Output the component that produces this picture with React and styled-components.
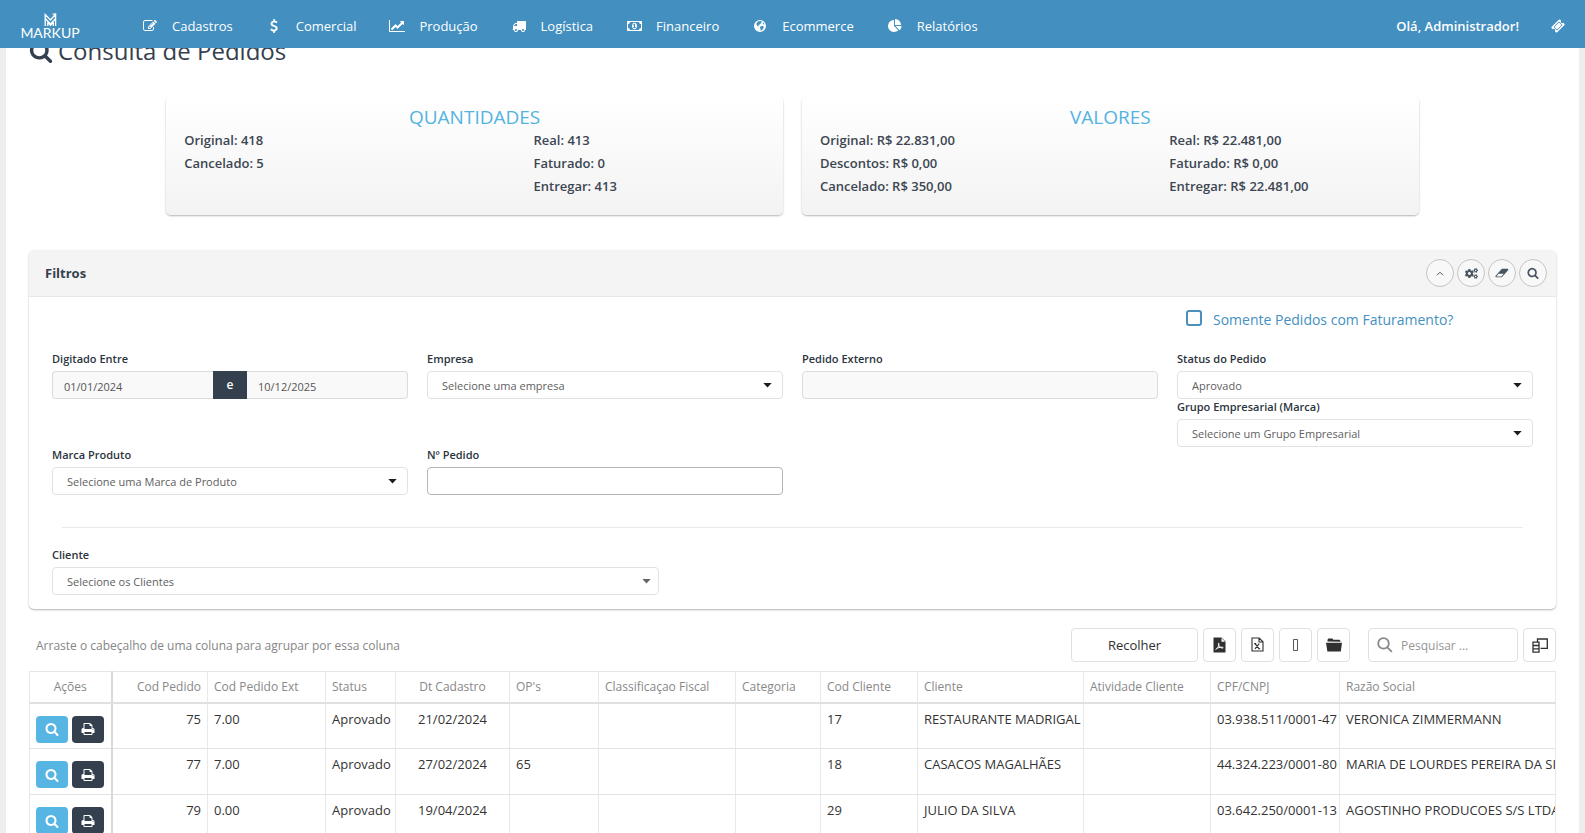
import styled, { createGlobalStyle } from 'styled-components';
import { FaCogs } from 'react-icons/fa';

const GlobalStyle = createGlobalStyle`
  * {
    box-sizing: border-box;
  }

  html {
    scrollbar-width: none;
  }

  body {
    margin: 0;
    background: #eeeeee;
    color: #34404e;
    font-family: 'Open Sans', 'Noto Sans', sans-serif;
    font-size: 13px;
  }

  button, input, select {
    font-family: inherit;
    font-size: inherit;
    color: inherit;
  }
`;

const Navbar = styled.header`
  position: fixed;
  top: 0;
  left: 0;
  right: 0;
  z-index: 10;
  display: flex;
  align-items: center;
  height: 48px;
  padding: 3px 20px 0;
  background: #438fc0;
  color: #fff;
`;

const Brand = styled.a`
  display: flex;
  flex-direction: column;
  align-items: center;
  width: 60px;
  color: #fff;
  font-family: Lato, sans-serif;
  font-size: 14px;
  line-height: 12px;
  text-decoration: none;
`;

const Menu = styled.nav`
  display: flex;
  flex: 1;
  gap: 31px;
  margin-left: 60px;
`;

const MenuLink = styled.a`
  display: flex;
  align-items: center;
  gap: 12px;
  color: #fff;
  text-decoration: none;
`;

const IconBox = styled.span`
  display: flex;
  justify-content: center;
  width: 20px;
`;

const UserName = styled.a`
  margin-right: 32px;
  color: #fff;
  font-weight: 600;
  text-decoration: none;
`;

const Page = styled.main`
  min-height: 100vh;
  margin: 0 6px;
  padding: 34px 23px 0;
  background: #fff;
`;

const Title = styled.h1`
  display: flex;
  align-items: center;
  gap: 5px;
  margin: 0;
  font-size: 24px;
  font-weight: 400;
  line-height: 34px;
`;

const Summary = styled.section`
  display: grid;
  grid-template-columns: 1fr 1fr;
  gap: 19px;
  width: 83.333%;
  margin: 29px auto 35px;
  padding: 0 10px;
`;

const SummaryCard = styled.div`
  height: 118px;
  padding: 8px 0 0 18px;
  border-radius: 5px;
  background: linear-gradient(#ffffff, #f3f3f3);
  box-shadow: 0 1px 2px rgba(0, 0, 0, 0.3);
  clip-path: inset(0 -3px -4px -3px);
  color: #3c4652;
  font-weight: 600;

  h2 {
    margin: 0 18px 0 0;
    color: #53b3e1;
    font-size: 19px;
    font-weight: 500;
    line-height: 24px;
    text-align: center;
  }
`;

const SummaryColumns = styled.div`
  display: grid;
  grid-template-columns: 7fr 5fr;
  line-height: 23px;

  p {
    margin: 0;
  }
`;

const Panel = styled.section`
  border-radius: 5px;
  background: #fff;
  box-shadow: 0 1px 2px rgba(0, 0, 0, 0.3);
`;

const PanelHeader = styled.div`
  display: flex;
  align-items: center;
  justify-content: space-between;
  height: 47px;
  padding: 0 9px 0 16px;
  border-bottom: 1px solid #e7e7e7;
  border-radius: 5px 5px 0 0;
  background: #f4f4f4;

  h3 {
    margin: 0;
    font-size: 13px;
    font-weight: 700;
  }
`;

const PanelActions = styled.div`
  display: flex;
  gap: 3px;
`;

const RoundButton = styled.button`
  display: flex;
  align-items: center;
  justify-content: center;
  width: 28px;
  height: 28px;
  padding: 0;
  border: 1px solid #c4c4c4;
  border-radius: 50%;
  background: #f8f8f8;
  color: #4a5461;
`;

const PanelBody = styled.div`
  padding: 0 23px 14px;
`;

const FieldGrid = styled.div`
  display: grid;
  grid-template-columns: repeat(4, 1fr);
  column-gap: 19px;
`;

const CheckLabel = styled.label`
  grid-column: 4;
  display: flex;
  align-items: center;
  gap: 11px;
  height: 54px;
  padding: 0 0 9px 9px;
  color: #4590c1;
  font-size: 14px;

  input {
    appearance: none;
    width: 16px;
    height: 16px;
    margin: 0 0 4px;
    border: 2px solid #4b8fbd;
    border-radius: 3px;
  }
`;

const Field = styled.div`
  width: ${({ $width }) => $width || 'auto'};
  font-size: 11px;

  label {
    display: block;
    margin-bottom: 5px;
    color: #2c343d;
    font-weight: 600;
    line-height: 15px;
  }
`;

const SelectBox = styled.div`
  position: relative;

  select {
    appearance: none;
    display: block;
    width: 100%;
    height: 28px;
    padding: 0 30px 0 14px;
    border: 1px solid #e2e2e2;
    border-radius: 4px;
    background: #fff;
    color: #606060;
  }

  svg {
    position: absolute;
    top: 12px;
    right: ${({ $muted }) => ($muted ? '8px' : '11px')};
    color: ${({ $muted }) => ($muted ? '#666' : '#1c1c1c')};
    pointer-events: none;
  }
`;

const TextInput = styled.input`
  display: block;
  width: 100%;
  min-width: 0;
  height: 28px;
  padding: 2px 11px 0;
  border: 1px solid ${({ $strong }) => ($strong ? '#b5b5b5' : '#dcdcdc')};
  border-radius: 4px;
  background: ${({ $strong }) => ($strong ? '#fff' : '#f9f9f9')};
  color: #555;
`;

const DateRange = styled.div`
  display: flex;

  input:first-child {
    border-right: 0;
    border-radius: 4px 0 0 4px;
  }

  input:last-child {
    border-left: 0;
    border-radius: 0 4px 4px 0;
  }
`;

const DateJoin = styled.span`
  flex: 0 0 34px;
  background: #34404e;
  color: #fff;
  font-size: 12px;
  font-weight: 600;
  line-height: 28px;
  text-align: center;
`;

const Divider = styled.hr`
  margin: 32px 10px 19px;
  border: 0;
  border-top: 1px solid #eaeaea;
`;

const Toolbar = styled.div`
  display: flex;
  align-items: center;
  gap: 5px;
  margin: 19px 0 9px;
`;

const GroupHint = styled.span`
  flex: 1;
  padding-left: 7px;
  color: #858585;
  font-size: 12px;
`;

const ToolButton = styled.button`
  display: flex;
  align-items: center;
  justify-content: center;
  width: ${({ $wide }) => ($wide ? '127px' : '33px')};
  height: 34px;
  padding: 0;
  border: 1px solid #e0e0e0;
  border-radius: 4px;
  background: #fff;
  color: #303030;
`;

const SearchBox = styled.label`
  display: flex;
  align-items: center;
  gap: 8px;
  width: 150px;
  height: 34px;
  margin-left: 13px;
  padding: 0 8px;
  border: 1px solid #e0e0e0;
  border-radius: 4px;
  color: #8a8a8a;
  font-size: 12px;

  input {
    flex: 1;
    min-width: 0;
    padding: 0;
    border: 0;
    outline: 0;
    background: none;
  }

  input::placeholder {
    color: #959595;
  }
`;

const Grid = styled.table`
  width: 100%;
  border-collapse: collapse;
  table-layout: fixed;
  border: 1px solid #e6e6e6;
  color: #333;

  th, td {
    overflow: hidden;
    padding: 0 6px;
    border-right: 1px solid #e9e9e9;
    text-align: left;
    white-space: nowrap;
  }

  th {
    height: 31px;
    border-bottom: 2px solid #e0e0e0;
    color: #888;
    font-size: 12px;
    font-weight: 400;
  }

  td {
    height: 46px;
    padding-top: 6px;
    border-bottom: 1px solid #e3e3e3;
    line-height: 18px;
    vertical-align: top;
  }

  th:first-child, td:first-child {
    border-right: 2px solid #d9d9d9;
    text-align: center;
  }

  th:nth-child(2), td:nth-child(2) {
    text-align: right;
  }

  th:nth-child(5), td:nth-child(5) {
    text-align: center;
  }

  th:last-child, td:last-child {
    padding-right: 0;
  }
`;

const RowActions = styled.div`
  display: flex;
  gap: 4px;
  padding-top: 6px;
`;

const RowButton = styled.button`
  display: flex;
  align-items: center;
  justify-content: center;
  width: 32px;
  height: 27px;
  padding: 0;
  border: 0;
  border-radius: 4px;
  background: ${({ $dark }) => ($dark ? '#34404e' : '#57b5e3')};
  color: #fff;
`;

const shapes = {
  search: [1792, 'M1216 832q0-185-131.5-316.5t-316.5-131.5-316.5 131.5-131.5 316.5 131.5 316.5 316.5 131.5 316.5-131.5 131.5-316.5zm512 832q0 52-38 90t-90 38q-54 0-90-38l-343-342q-179 124-399 124-143 0-273.5-55.5t-225-150-150-225-55.5-273.5 55.5-273.5 150-225 225-150 273.5-55.5 273.5 55.5 225 150 150 225 55.5 273.5q0 220-124 399l343 343q37 37 37 90z'],
  edit: [1792, 'M888 1184l116-116-152-152-116 116v56h96v96h56zm440-720q-16-16-33 1l-350 350q-17 17-1 33t33-1l350-350q17-17 1-33zm80 594v190q0 119-84.5 203.5t-203.5 84.5h-832q-119 0-203.5-84.5t-84.5-203.5v-832q0-119 84.5-203.5t203.5-84.5h832q63 0 117 25 15 7 18 23 3 17-9 29l-49 49q-14 14-32 8-23-6-45-6h-832q-66 0-113 47t-47 113v832q0 66 47 113t113 47h832q66 0 113-47t47-113v-126q0-13 9-22l64-64q15-15 35-7t20 29zm-96-738l288 288-672 672h-288v-288zm444 132l-92 92-288-288 92-92q28-28 68-28t68 28l152 152q28 28 28 68t-28 68z'],
  dollar: [1792, 'M1362 1185q0 153-99.5 263.5t-258.5 136.5v175q0 14-9 23t-23 9h-135q-13 0-22.5-9.5t-9.5-22.5v-175q-66-9-127.5-31t-101.5-44.5-74-48-46.5-37.5-17.5-18q-17-21-2-41l103-135q7-10 23-12 15-2 24 9l2 2q113 99 243 125 37 8 74 8 81 0 142.5-43t61.5-122q0-28-15-53t-33.5-42-58.5-37.5-66-32-80-32.5q-39-16-61.5-25t-61.5-26.5-62.5-31-56.5-35.5-53.5-42.5-43.5-49-35.5-58-21-66.5-8.5-78q0-138 98-242t255-134v-180q0-13 9.5-22.5t22.5-9.5h135q14 0 23 9t9 23v176q57 6 110.5 23t87 33.5 63.5 37.5 39 29 15 14q17 18 5 38l-81 146q-8 15-23 16-14 3-27-7-3-3-14.5-12t-39-26.5-58.5-32-74.5-26-85.5-11.5q-95 0-155 43t-60 111q0 26 8.5 48t29.5 41.5 39.5 33 56 31 60.5 27 70 27.5q53 20 81 31.5t76 35 75.5 42.5 62 50 53 63.5 31.5 76.5 13 94z'],
  chart: [2048, 'M2048 1536v128h-2048v-1536h128v1408h1920zm-128-1248v435q0 21-19.5 29.5t-35.5-7.5l-121-121-633 633q-10 10-23 10t-23-10l-233-233-416 416-192-192 585-585q10-10 23-10t23 10l233 233 464-464-121-121q-16-16-7.5-35.5t29.5-19.5h435q14 0 23 9t9 23z'],
  truck: [1792, 'M640 1408q0-52-38-90t-90-38-90 38-38 90 38 90 90 38 90-38 38-90zm-384-512h384v-256h-158q-13 0-22 9l-195 195q-9 9-9 22v30zm1280 512q0-52-38-90t-90-38-90 38-38 90 38 90 90 38 90-38 38-90zm256-1088v1024q0 15-4 26.5t-13.5 18.5-16.5 11.5-23.5 6-22.5 2-25.5 0-22.5-.5q0 106-75 181t-181 75-181-75-75-181h-384q0 106-75 181t-181 75-181-75-75-181h-64q-3 0-22.5.5t-25.5 0-22.5-2-23.5-6-16.5-11.5-13.5-18.5-4-26.5q0-26 19-45t45-19v-320q0-8-.5-35t0-38 2.5-34.5 6.5-37 14-30.5 22.5-30l198-198q19-19 50.5-32t58.5-13h160v-192q0-26 19-45t45-19h1024q26 0 45 19t19 45z'],
  money: [1920, 'M768 1152h384v-96h-128v-448h-114l-148 137 77 80q42-37 55-57h2v288h-128v96zm512-256q0 70-21 142t-59.5 134-101.5 101-138 39-138-39-101.5-101-59.5-134-21-142 21-142 59.5-134 101.5-101 138-39 138 39 101.5 101 59.5 134 21 142zm512 256v-512q-106 0-181-75t-75-181h-1152q0 106-75 181t-181 75v512q106 0 181 75t75 181h1152q0-106 75-181t181-75zm128-832v1152q0 26-19 45t-45 19h-1792q-26 0-45-19t-19-45v-1152q0-26 19-45t45-19h1792q26 0 45 19t19 45z'],
  globe: [1792, 'M896 128a768 768 0 1 0 0 1536a768 768 0 1 0 0-1536zM620 330l180-70 70 60 110-50 140 20-70 120 60 70-120 60-50 110-150 80 10 90-100-30-60 70 120 60-50 50-150-90-110-190 10-150zM1010 940l190-70 190 110-60 190-210 280-130 40-30-230-90-140zM1250 430l160 130 60 130-120 20-100-120z'],
  pie: [1792, 'M768 890l546 546q-106 108-247.5 168t-298.5 60q-209 0-385.5-103t-279.5-279.5-103-385.5 103-385.5 279.5-279.5 385.5-103v762zm187 6h773q0 157-60 298.5t-168 247.5zm709-128h-768v-768q209 0 385.5 103t279.5 279.5 103 385.5z'],
  ticket: [1792, 'M1024 452l316 316-572 572-316-316zm-211 979l618-618q19-19 19-45t-19-45l-362-362q-18-18-45-18t-45 18l-618 618q-19 19-19 45t19 45l362 362q18 18 45 18t45-18zm889-637l-907 908q-37 37-90.5 37t-90.5-37l-126-126q56-56 56-136t-56-136-136-56-136 56l-125-126q-37-37-37-90.5t37-90.5l907-906q37-37 90.5-37t90.5 37l125 125q-56 56-56 136t56 136 136 56 136-56l126 125q37 37 37 90.5t-37 90.5z'],
  eraser: [2048, 'M960 1408l336-384h-768l-336 384h768zm1013-1077q15 34 9.5 71.5t-30.5 65.5l-896 1024q-38 44-96 44h-768q-38 0-69.5-20.5t-47.5-54.5q-15-34-9.5-71.5t30.5-65.5l896-1024q38-44 96-44h768q38 0 69.5 20.5t47.5 54.5z'],
  print: [1792, 'M448 1536h896v-256h-896v256zm0-640h896v-384h-160q-40 0-68-28t-28-68v-160h-640v640zm1152 64q0-26-19-45t-45-19-45 19-19 45 19 45 45 19 45-19 19-45zm128 0v416q0 13-9.5 22.5t-22.5 9.5h-224v160q0 40-28 68t-68 28h-960q-40 0-68-28t-28-68v-160h-224q-13 0-22.5-9.5t-9.5-22.5v-416q0-79 56.5-135.5t135.5-56.5h64v-544q0-40 28-68t68-28h672q40 0 88 20t76 48l152 152q28 28 48 76t20 88v256h64q79 0 135.5 56.5t56.5 135.5z'],
};

function Icon({ name, size = 14 }) {
  const [width, path] = shapes[name];
  return (
    <svg width={(size * width) / 1792} height={size} viewBox={`0 0 ${width} 1792`} fill="currentColor" fillRule="evenodd" aria-hidden="true">
      <path d={path} />
    </svg>
  );
}

function Caret() {
  return (
    <svg width="9" height="5" viewBox="0 0 9 5" fill="currentColor" aria-hidden="true">
      <path d="M0.3 0h8.4L4.5 4.6z" />
    </svg>
  );
}

function Logo() {
  return (
    <svg width="13" height="14" viewBox="0 0 13 14" fill="none" stroke="currentColor" strokeWidth="1.3" aria-hidden="true">
      <path d="M1.2 13V1.5L6.5 7 11.6 1.2V13M1.2 5.5L6.5 11l5-5.2M3.8 13V9.4l2.7 2.9 2.8-2.9V13M8.6 1.2h3" />
    </svg>
  );
}

function PdfIcon() {
  return (
    <svg width="13" height="16" viewBox="0 0 13 16" aria-hidden="true">
      <path fill="currentColor" d="M0.5 0.5h8L12.5 4.6V15.5h-12z" />
      <path fill="#fff" d="M8.5 1v3.7h3.6z" />
      <path fill="none" stroke="#fff" strokeWidth="1" d="M2.5 12.6c2-0.8 4-4.6 3.4-6.2-0.9-0.9-0.9 1.8 1 3.5 1.4 1.4 3.4 1.5 3.3 0.7-0.4-1-4.2-0.3-6.3 0.8" />
    </svg>
  );
}

function XlsIcon() {
  return (
    <svg width="13" height="16" viewBox="0 0 13 16" fill="none" stroke="currentColor" strokeWidth="1.1" aria-hidden="true">
      <path d="M1 1h7.2L12 4.8V14H1zM8 1v4h4" />
      <path d="M4 6.6l4.2 5.2M8.2 6.6L4 11.8M3.2 6.6h2M7.2 11.8h2" />
    </svg>
  );
}

function FolderIcon() {
  return (
    <svg width="16" height="14" viewBox="0 0 16 14" fill="currentColor" aria-hidden="true">
      <path d="M1.5 3.6V1.7L2.4.5h4l1 1.3h6l1 1v.9z" />
      <path d="M0 4.7h16l-1.2 8.8H1.4z" />
    </svg>
  );
}

function ColumnChooserIcon() {
  return (
    <svg width="16" height="15" viewBox="0 0 16 15" fill="none" stroke="currentColor" strokeWidth="1.3" aria-hidden="true">
      <path d="M5.5 4V1h9.8v9.3H8.5" />
      <path d="M1 4.2h6v10H1zM1 7.5h6M1 10.9h6" />
    </svg>
  );
}

const menu = [
  ['edit', 'Cadastros'],
  ['dollar', 'Comercial'],
  ['chart', 'Produção'],
  ['truck', 'Logística'],
  ['money', 'Financeiro'],
  ['globe', 'Ecommerce'],
  ['pie', 'Relatórios'],
];

const totals = [
  {
    title: 'QUANTIDADES',
    left: ['Original: 418', 'Cancelado: 5'],
    right: ['Real: 413', 'Faturado: 0', 'Entregar: 413'],
  },
  {
    title: 'VALORES',
    left: ['Original: R$ 22.831,00', 'Descontos: R$ 0,00', 'Cancelado: R$ 350,00'],
    right: ['Real: R$ 22.481,00', 'Faturado: R$ 0,00', 'Entregar: R$ 22.481,00'],
  },
];

const columns = [
  ['Ações', 82],
  ['Cod Pedido', 96],
  ['Cod Pedido Ext', 118],
  ['Status', 70],
  ['Dt Cadastro', 114],
  ["OP's", 89],
  ['Classificaçao Fiscal', 137],
  ['Categoria', 85],
  ['Cod Cliente', 97],
  ['Cliente', 166],
  ['Atividade Cliente', 127],
  ['CPF/CNPJ', 129],
  ['Razão Social'],
];

const orders = [
  ['75', '7.00', 'Aprovado', '21/02/2024', '', '', '', '17', 'RESTAURANTE MADRIGAL', '', '03.938.511/0001-47', 'VERONICA ZIMMERMANN'],
  ['77', '7.00', 'Aprovado', '27/02/2024', '65', '', '', '18', 'CASACOS MAGALHÃES', '', '44.324.223/0001-80', 'MARIA DE LOURDES PEREIRA DA SILVA'],
  ['79', '0.00', 'Aprovado', '19/04/2024', '', '', '', '29', 'JULIO DA SILVA', '', '03.642.250/0001-13', 'AGOSTINHO PRODUCOES S/S LTDA'],
];

function SelectField({ id, label, value, width, muted }) {
  return (
    <Field $width={width}>
      <label htmlFor={id}>{label}</label>
      <SelectBox $muted={muted}>
        <select id={id}>
          <option>{value}</option>
        </select>
        <Caret />
      </SelectBox>
    </Field>
  );
}

export default function App() {
  return (
    <>
      <GlobalStyle />
      <Navbar>
        <Brand href="#">
          <Logo />
          MARKUP
        </Brand>
        <Menu>
          {menu.map(([icon, label]) => (
            <MenuLink href="#" key={label}>
              <IconBox>
                <Icon name={icon} />
              </IconBox>
              {label}
            </MenuLink>
          ))}
        </Menu>
        <UserName href="#">Olá, Administrador!</UserName>
        <Icon name="ticket" />
      </Navbar>

      <Page>
        <Title>
          <Icon name="search" size={24} />
          Consulta de Pedidos
        </Title>

        <Summary>
          {totals.map((card) => (
            <SummaryCard key={card.title}>
              <h2>{card.title}</h2>
              <SummaryColumns>
                <div>
                  {card.left.map((line) => (
                    <p key={line}>{line}</p>
                  ))}
                </div>
                <div>
                  {card.right.map((line) => (
                    <p key={line}>{line}</p>
                  ))}
                </div>
              </SummaryColumns>
            </SummaryCard>
          ))}
        </Summary>

        <Panel>
          <PanelHeader>
            <h3>Filtros</h3>
            <PanelActions>
              <RoundButton aria-label="Recolher filtros">
                <svg width="8" height="5" viewBox="0 0 8 5" fill="none" stroke="currentColor" aria-hidden="true">
                  <path d="M1 4.2l3-3 3 3" />
                </svg>
              </RoundButton>
              <RoundButton aria-label="Configurar">
                <FaCogs size={13} />
              </RoundButton>
              <RoundButton aria-label="Limpar">
                <Icon name="eraser" size={12} />
              </RoundButton>
              <RoundButton aria-label="Buscar">
                <Icon name="search" size={12} />
              </RoundButton>
            </PanelActions>
          </PanelHeader>
          <PanelBody>
            <FieldGrid>
              <CheckLabel>
                <input type="checkbox" />
                Somente Pedidos com Faturamento?
              </CheckLabel>
              <Field>
                <label htmlFor="date-from">Digitado Entre</label>
                <DateRange>
                  <TextInput id="date-from" defaultValue="01/01/2024" />
                  <DateJoin>e</DateJoin>
                  <TextInput aria-label="Data final" defaultValue="10/12/2025" />
                </DateRange>
              </Field>
              <SelectField id="company" label="Empresa" value="Selecione uma empresa" />
              <Field>
                <label htmlFor="external">Pedido Externo</label>
                <TextInput id="external" />
              </Field>
              <div>
                <SelectField id="status" label="Status do Pedido" value="Aprovado" />
                <SelectField id="group" label="Grupo Empresarial (Marca)" value="Selecione um Grupo Empresarial" />
              </div>
              <SelectField id="brand" label="Marca Produto" value="Selecione uma Marca de Produto" />
              <Field>
                <label htmlFor="number">Nº Pedido</label>
                <TextInput id="number" $strong />
              </Field>
            </FieldGrid>
            <Divider />
            <SelectField id="client" label="Cliente" value="Selecione os Clientes" width="41%" muted />
          </PanelBody>
        </Panel>

        <Toolbar>
          <GroupHint>Arraste o cabeçalho de uma coluna para agrupar por essa coluna</GroupHint>
          <ToolButton $wide>Recolher</ToolButton>
          <ToolButton aria-label="Exportar PDF">
            <PdfIcon />
          </ToolButton>
          <ToolButton aria-label="Exportar Excel">
            <XlsIcon />
          </ToolButton>
          <ToolButton aria-label="Exportar">
            <svg width="5" height="12" viewBox="0 0 5 12" fill="none" stroke="currentColor" strokeWidth="0.8" aria-hidden="true">
              <path d="M0.5 0.5h4v11h-4z" />
            </svg>
          </ToolButton>
          <ToolButton aria-label="Abrir">
            <FolderIcon />
          </ToolButton>
          <SearchBox>
            <svg width="16" height="16" viewBox="0 0 16 16" fill="none" stroke="currentColor" strokeWidth="1.8" aria-hidden="true">
              <path d="M10.3 10.3l4.6 4.6M11.8 6.4a5.3 5.3 0 1 1-10.6 0a5.3 5.3 0 0 1 10.6 0z" />
            </svg>
            <input aria-label="Pesquisar" placeholder="Pesquisar ..." />
          </SearchBox>
          <ToolButton aria-label="Colunas">
            <ColumnChooserIcon />
          </ToolButton>
        </Toolbar>

        <Grid>
          <colgroup>
            {columns.map(([label, width]) => (
              <col key={label} width={width} />
            ))}
          </colgroup>
          <thead>
            <tr>
              {columns.map(([label]) => (
                <th key={label}>{label}</th>
              ))}
            </tr>
          </thead>
          <tbody>
            {orders.map((order) => (
              <tr key={order[0]}>
                <td>
                  <RowActions>
                    <RowButton aria-label="Visualizar">
                      <Icon name="search" size={14} />
                    </RowButton>
                    <RowButton $dark aria-label="Imprimir">
                      <Icon name="print" size={14} />
                    </RowButton>
                  </RowActions>
                </td>
                {order.map((value, index) => (
                  <td key={index}>{value}</td>
                ))}
              </tr>
            ))}
          </tbody>
        </Grid>
      </Page>
    </>
  );
}
